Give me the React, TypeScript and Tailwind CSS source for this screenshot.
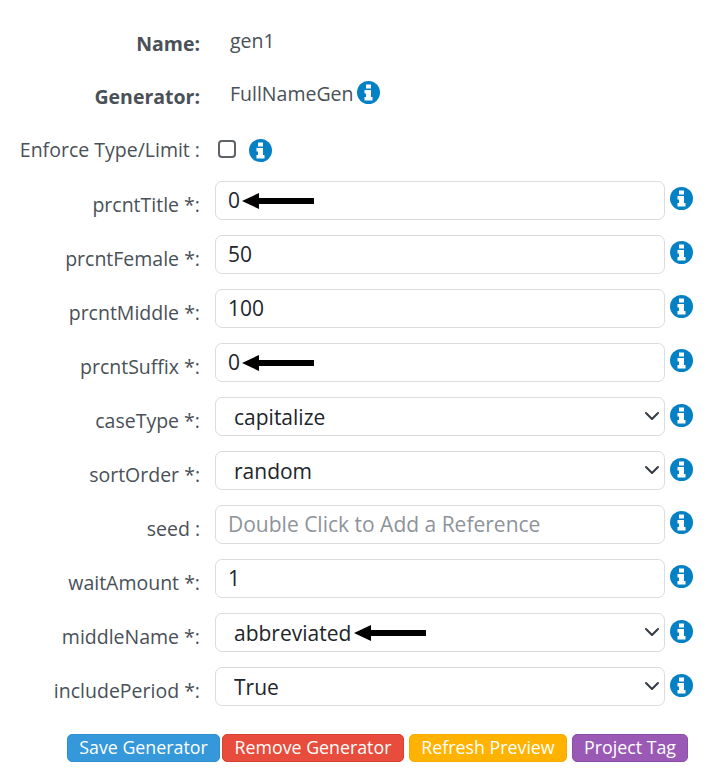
const font = { fontFamily: '"Open Sans", sans-serif' };

function Arrow({ className }: { className: string }) {
  return (
    <svg className={`pointer-events-none absolute top-1/2 -translate-y-1/2 ${className}`} width="72" height="18" viewBox="0 0 72 18">
      <path d="M0 9 17 1v5h55v6H17v5z" fill="#000" />
    </svg>
  );
}

// blocky "i" like the old icon font used in the page
function Info({ className = "" }: { className?: string }) {
  return (
    <svg className={`shrink-0 ${className}`} width="23" height="23" viewBox="0 0 23 23">
      <circle cx="11.5" cy="11.5" r="11.5" fill="#0480c4" />
      <path d="M9 3.5h5v4H9zM7.5 9H14v7h1.5v3.5h-8V16H9v-3.5H7.5z" fill="#fff" />
    </svg>
  );
}

function Label({ children, bold }: { children: React.ReactNode; bold?: boolean }) {
  return (
    <label className={`w-[200px] shrink-0 whitespace-nowrap text-right text-[19.5px] text-[#495057] ${bold ? "font-bold" : ""}`}>
      {children}
    </label>
  );
}

function InputRow({ label, value, placeholder, arrowAt }: { label: string; value?: string; placeholder?: string; arrowAt?: string }) {
  return (
    <div className="flex h-[54px] items-start">
      <div className="mt-[9px] flex">
        <Label>{label}</Label>
      </div>
      <div className="relative ml-[15px] h-[39px] w-[450px]">
        <input
          defaultValue={value}
          placeholder={placeholder}
          className="h-full w-full rounded-[7px] border border-[#dcdcdc] bg-white px-3 pb-[2px] text-[21px] text-[#212529] outline-none placeholder:text-[#8d9399]"
        />
        {arrowAt && <Arrow className={arrowAt} />}
      </div>
      <Info className="ml-[5px] mt-[6px]" />
    </div>
  );
}

function SelectRow({ label, value, arrowAt }: { label: string; value: string; arrowAt?: string }) {
  return (
    <div className="flex h-[54px] items-start">
      <div className="mt-[9px] flex">
        <Label>{label}</Label>
      </div>
      <div className="relative ml-[15px] h-[39px] w-[450px]">
        <select
          defaultValue={value}
          className="h-full w-full appearance-none rounded-[7px] border border-[#dcdcdc] bg-white pl-[18px] pt-[2px] text-[21px] text-[#212529] outline-none"
        >
          <option>{value}</option>
        </select>
        <svg className="pointer-events-none absolute right-[5px] top-[11px]" width="16" height="16" viewBox="0 0 16 16" fill="none">
          <path d="m2 5 6 6 6-6" stroke="#343a40" strokeWidth="2" strokeLinecap="round" strokeLinejoin="round" />
        </svg>
        {arrowAt && <Arrow className={arrowAt} />}
      </div>
      <Info className="ml-[5px] mt-[7px]" />
    </div>
  );
}

function Btn({ children, className }: { children: React.ReactNode; className: string }) {
  return (
    <button className={`h-[28px] rounded-[5px] border text-[17.8px] leading-none text-white ${className}`}>
      {children}
    </button>
  );
}

export default function App() {
  return (
    <div className="h-[777px] w-[727px] overflow-hidden bg-white" style={font}>
      <div className="pt-[29px]">
        <div className="flex h-[53px] items-start">
          <Label bold>Name:</Label>
          <span className="ml-[30px] text-[19.5px] leading-[23px] text-[#495057]">gen1</span>
        </div>
        <div className="flex h-[53px] items-start">
          <Label bold>Generator:</Label>
          <span className="ml-[30px] text-[19.5px] leading-[23px] text-[#495057]">FullNameGen</span>
          <Info className="ml-[4px] -mt-[1px]" />
        </div>
        <div className="flex h-[46px] items-start">
          <Label>Enforce Type/Limit :</Label>
          <input type="checkbox" className="ml-[18px] mt-[5px] h-[18px] w-[18px] appearance-none rounded-[4px] border-2 border-[#5f6368] bg-white" />
          <Info className="ml-[13px] mt-[4px]" />
        </div>
        <div>
          <InputRow label="prcntTitle *:" value="0" arrowAt="left-[27px]" />
          <InputRow label="prcntFemale *:" value="50" />
          <InputRow label="prcntMiddle *:" value="100" />
          <InputRow label="prcntSuffix *:" value="0" arrowAt="left-[27px]" />
          <SelectRow label="caseType *:" value="capitalize" />
          <SelectRow label="sortOrder *:" value="random" />
          <InputRow label="seed :" placeholder="Double Click to Add a Reference" />
          <InputRow label="waitAmount *:" value="1" />
          <SelectRow label="middleName *:" value="abbreviated" arrowAt="left-[139px]" />
          <SelectRow label="includePeriod *:" value="True" />
        </div>
        <div className="ml-[67px] mt-[13px] flex">
          <Btn className="w-[153px] border-[#2f8fd0] bg-[#3498db]">Save Generator</Btn>
          <Btn className="ml-[2px] w-[182px] border-[#d9402f] bg-[#e74c3c]">Remove Generator</Btn>
          <Btn className="ml-[5px] w-[158px] border-[#f5ac00] bg-[#ffb300]">Refresh Preview</Btn>
          <Btn className="ml-[5px] w-[116px] border-[#8d50a8] bg-[#9b59b6]">Project Tag</Btn>
        </div>
      </div>
    </div>
  );
}
